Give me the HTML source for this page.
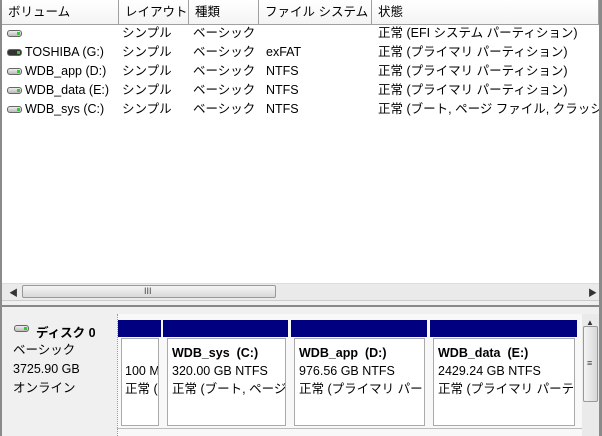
<!DOCTYPE html>
<html><head><meta charset="utf-8"><style>
*{margin:0;padding:0;box-sizing:border-box;white-space:nowrap}
body{width:602px;height:436px;overflow:hidden;background:#fff;font-family:"Liberation Sans","Noto Sans CJK JP",sans-serif;font-size:12.5px;color:#000;position:relative}
.a{position:absolute}
.hd{position:absolute;top:0;height:25px;border-right:1px solid #a0a0a0;border-bottom:1px solid #a0a0a0;background:linear-gradient(#fff,#f4f4f4);padding:4px 0 0 6px;line-height:16px;overflow:hidden}
.row{position:absolute;left:0;width:598px;height:19px;line-height:19px}
.row span{position:absolute}
.ic{position:absolute;left:7px;top:6px;width:15px;height:7px;border:1px solid #666;border-radius:3px;background:linear-gradient(#eee,#bbb)}
.ic:after{content:"";position:absolute;right:1px;top:1px;width:3px;height:3px;background:#3c3}
.blue{position:absolute;top:320px;height:17px;background:#000080}
.box{position:absolute;top:338px;height:88px;background:#fff;border:1px solid #aaa;overflow:hidden;line-height:18px;padding:5px 0 0 8px}
</style></head><body>
<div class="a" style="left:0;top:0;width:2px;height:436px;background:#8a8a8a;z-index:5"></div>
<div class="a" style="left:599px;top:0;width:3px;height:436px;background:#8a8a8a;z-index:5"></div>
<div class="hd" style="left:2px;width:117px">ボリューム</div>
<div class="hd" style="left:119px;width:70px">レイアウト</div>
<div class="hd" style="left:189px;width:70px">種類</div>
<div class="hd" style="left:259px;width:113px">ファイル システム</div>
<div class="hd" style="left:372px;width:227px">状態</div>

<div class="row" style="top:24px"><i class="ic"></i><span style="left:122px">シンプル</span><span style="left:193px">ベーシック</span><span style="left:378px">正常 (EFI システム パーティション)</span></div>
<div class="row" style="top:43px"><i class="ic" style="background:#333"></i><span style="left:25px">TOSHIBA (G:)</span><span style="left:122px">シンプル</span><span style="left:193px">ベーシック</span><span style="left:266px">exFAT</span><span style="left:378px">正常 (プライマリ パーティション)</span></div>
<div class="row" style="top:62px"><i class="ic"></i><span style="left:25px">WDB_app (D:)</span><span style="left:122px">シンプル</span><span style="left:193px">ベーシック</span><span style="left:266px">NTFS</span><span style="left:378px">正常 (プライマリ パーティション)</span></div>
<div class="row" style="top:81px"><i class="ic"></i><span style="left:25px">WDB_data (E:)</span><span style="left:122px">シンプル</span><span style="left:193px">ベーシック</span><span style="left:266px">NTFS</span><span style="left:378px">正常 (プライマリ パーティション)</span></div>
<div class="row" style="top:100px"><i class="ic"></i><span style="left:25px">WDB_sys (C:)</span><span style="left:122px">シンプル</span><span style="left:193px">ベーシック</span><span style="left:266px">NTFS</span><span style="left:378px">正常 (ブート, ページ ファイル, クラッシュ</span></div>

<div class="a" style="left:2px;top:283px;width:597px;height:17px;background:#eaeaea;border-top:1px solid #ddd"></div>
<div class="a" style="left:9px;top:286px;font-size:9px;color:#333">◀</div>
<div class="a" style="left:588px;top:286px;font-size:9px;color:#333">▶</div>
<div class="a" style="left:22px;top:285px;width:254px;height:13px;border:1px solid #999;border-radius:2px;background:linear-gradient(#f4f4f4,#d8d8d8)"></div>
<div class="a" style="left:144px;top:286px;font-size:9px;color:#444">III</div>
<div class="a" style="left:2px;top:300px;width:597px;height:6px;background:#f0f0f0;border-top:1px solid #ccc"></div>
<div class="a" style="left:2px;top:305px;width:597px;height:2px;background:#888"></div>

<div class="a" style="left:2px;top:307px;width:597px;height:129px;background:#f0f0f0"></div>
<div class="a" style="left:117px;top:314px;width:465px;height:122px;background:#f8f8f8;border-left:1px dotted #999"></div>
<i class="ic" style="left:14px;top:325px"></i>
<div class="a" style="left:36px;top:322px;font-weight:bold">ディスク 0</div>
<div class="a" style="left:13px;top:341px;line-height:19px">ベーシック<br>3725.90 GB<br>オンライン</div>

<div class="blue" style="left:118px;width:43px"></div>
<div class="blue" style="left:163px;width:125px"></div>
<div class="blue" style="left:291px;width:136px"></div>
<div class="blue" style="left:430px;width:147px"></div>
<div class="box" style="left:121px;width:38px;padding-top:23px;padding-left:3px">100 MB<br>正常 (</div>
<div class="box" style="left:167px;width:119px;padding-left:4px"><b>WDB_sys&nbsp; (C:)</b><br>320.00 GB NTFS<br>正常 (ブート, ページ</div>
<div class="box" style="left:294px;width:131px;padding-left:4px"><b>WDB_app&nbsp; (D:)</b><br>976.56 GB NTFS<br>正常 (プライマリ パー</div>
<div class="box" style="left:433px;width:142px;padding-left:4px"><b>WDB_data&nbsp; (E:)</b><br>2429.24 GB NTFS<br>正常 (プライマリ パーテ</div>
<div class="a" style="left:117px;top:428px;width:465px;height:1px;background:#bbb"></div>

<div class="a" style="left:582px;top:314px;width:17px;height:122px;background:#eaeaea"></div>
<div class="a" style="left:586px;top:318px;font-size:8px;color:#333">▲</div>
<div class="a" style="left:583px;top:326px;width:15px;height:76px;border:1px solid #999;border-radius:2px;background:linear-gradient(90deg,#f4f4f4,#d8d8d8)"></div>
<div class="a" style="left:587px;top:358px;font-size:9px;color:#444">≡</div>
</body></html>
